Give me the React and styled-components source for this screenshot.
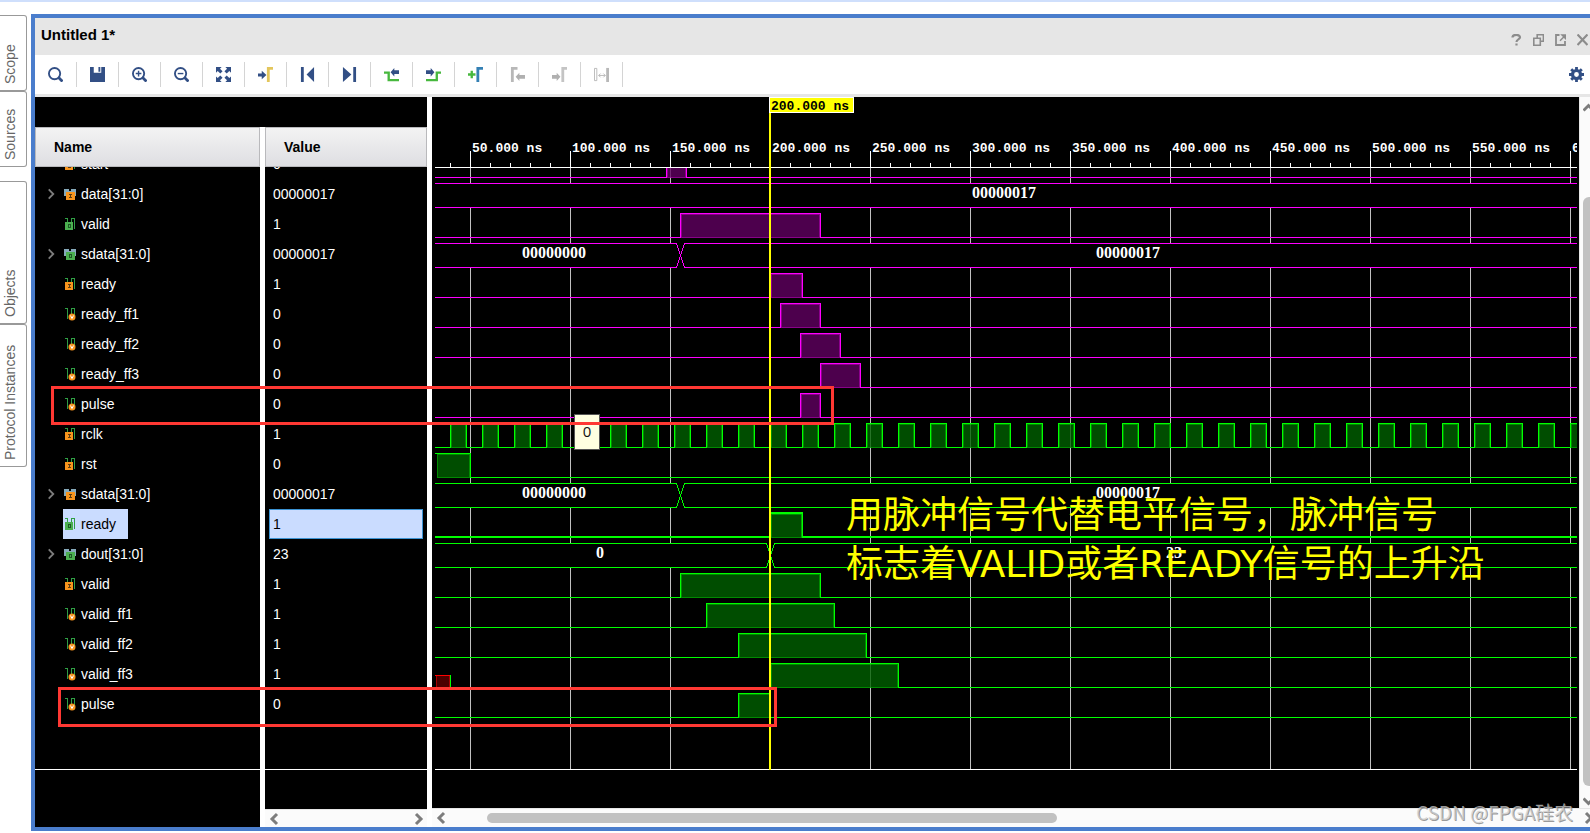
import React from "react";
import styled, { createGlobalStyle, css } from "styled-components";

const GlobalStyle = createGlobalStyle`
  * { box-sizing: border-box; }
  body {
    margin: 0;
    background: #fff;
    font-family: "Liberation Sans", Arial, sans-serif;
    font-size: 14px;
    overflow: hidden;
  }
  button {
    font: inherit;
    border: none;
    background: none;
    padding: 0;
    margin: 0;
    cursor: pointer;
  }
  svg { display: block; }
`;

const Page = styled.div`
  display: flex;
  min-height: 100vh;
  border-top: 2px solid #cfdffc;
  padding: 12px 0 2px;
`;

const Sidebar = styled.nav`
  display: flex;
  flex-direction: column;
  flex: none;
  width: 31px;
  padding-top: 1px;
`;

const TabGroup = styled.div`
  display: flex;
  flex-direction: column;
  margin-bottom: 14px;
`;

const SideTab = styled.button`
  writing-mode: vertical-rl;
  transform: rotate(180deg);
  width: 27px;
  height: ${(p) => (p.$tall ? 143 : 76)}px;
  padding: 6px 2px 4px 8px;
  text-align: left;
  line-height: 16px;
  color: #666;
  border: 1px solid #999;
  border-right: none;
  border-radius: 3px 0 0 3px;
`;

const Panel = styled.main`
  display: flex;
  flex-direction: column;
  flex: 1;
  min-width: 0;
  border: 4px solid #4a7dcc;
  border-right: none;
`;

const TitleBar = styled.header`
  display: flex;
  justify-content: space-between;
  height: 37px;
  padding: 0 2px 0 6px;
  background: #e6e6e6;
`;

const Title = styled.h1`
  margin: 0;
  font-size: 15px;
  line-height: 34px;
  font-weight: bold;
`;

const WindowButtons = styled.div`
  display: flex;
  align-items: center;
  gap: 11px;
  padding-top: 6px;
`;

const Toolbar = styled.div`
  display: flex;
  align-items: center;
  height: 42px;
  padding-right: 4px;
  background: #fff;
  border-bottom: 3px solid #e6e6e6;
`;

const ToolButton = styled.button`
  display: flex;
  align-items: center;
  justify-content: center;
  width: 42px;
  height: 25px;
  border-right: 1px solid #d4d4d4;
`;

const GearButton = styled.button`
  display: flex;
  justify-content: center;
  width: 20px;
  margin-left: auto;
`;

const Body = styled.div`
  position: relative;
  display: flex;
  flex: 1;
`;

const SignalTable = styled.table`
  flex: none;
  width: 392px;
  height: 100%;
  table-layout: fixed;
  border-collapse: separate;
  border-spacing: 0;
  background: #000;
  color: #fff;
  margin-right: 5px;
  td, th { padding: 0; }
  tr > .name { border-right: 5px solid #fff; }
`;

const HeadCell = styled.th`
  height: 40px;
  text-align: left;
  color: #000;
  div {
    height: 40px;
    line-height: 38px;
    padding-left: 18px;
    border: 1px solid #b9b9bc;
    background: linear-gradient(#f3f3f3, #dedee2);
  }
`;

const Cell = styled.td`
  height: ${(p) => p.$height}px;
`;

const RowBox = styled.div`
  display: flex;
  align-items: flex-end;
  height: ${(p) => (p.$cut ? 12 : 30)}px;
  overflow: hidden;
`;

const Expander = styled.button`
  display: flex;
  align-items: center;
  width: 28px;
  height: 30px;
  padding-left: 11px;
  flex: none;
`;

const NameLabel = styled.div`
  display: flex;
  align-items: center;
  height: 30px;
  flex: none;
  padding-right: 12px;
  gap: 4px;
  ${(p) => p.$selected && css`
    background: #cadcff;
    color: #000;
  `}
`;

const ValueLabel = styled.div`
  flex: 1;
  height: 30px;
  line-height: 28px;
  margin: 0 4px;
  padding: 0 3px;
  border: 1px solid transparent;
  ${(p) => p.$selected && css`
    background: #cadcff;
    border-color: #3b93d3;
    color: #000;
  `}
`;

const EndLine = styled.td`
  height: 51px;
  border-bottom: 1px solid #fff;
`;

const ScrollX = styled.div`
  display: flex;
  align-items: center;
  justify-content: space-between;
  height: ${(p) => p.$height}px;
  padding: 0 3px 0 4px;
  overflow: hidden;
  background: #fbfbfb;
  border-top: 1px solid #e6e6e6;
  ${(p) => p.$clip && css`
    padding-right: 0;
    button:last-child { margin-right: -4px; }
  `}
`;

const ThumbX = styled.div`
  width: 570px;
  height: 10px;
  border-radius: 5px;
  background: #c1c1c1;
  margin: 0 auto 0 40px;
`;

const WaveArea = styled.section`
  display: flex;
  flex-direction: column;
  flex: 1;
  min-width: 0;
`;

const WaveRow = styled.div`
  display: flex;
  flex: 1;
  min-height: 0;
`;

const WaveCanvas = styled.div`
  flex: 1;
  min-width: 0;
  padding: 0 2px 0 3px;
  background: #000;
  svg { width: 100%; height: 673px; overflow: hidden; }
`;

const ScrollY = styled.div`
  display: flex;
  flex-direction: column;
  width: 11px;
  flex: none;
  overflow: hidden;
  padding: 4px 0 0 3px;
  border-left: 1px solid #e6e6e6;
  background: #fbfbfb;
`;

const ThumbY = styled.div`
  width: 12px;
  flex: 1;
  margin: 82px 0 8px;
  border-radius: 6px;
  background: #c1c1c1;
`;

const Ruler = styled.text`
  font: bold 13px "Liberation Mono", monospace;
  fill: ${(p) => p.$color || "#fff"};
`;

const BusText = styled.text`
  font: bold 16px "Liberation Serif", serif;
  fill: #fff;
  text-anchor: middle;
`;

const Highlight = styled.div`
  position: absolute;
  left: ${(p) => p.$x}px;
  top: ${(p) => p.$y}px;
  width: ${(p) => p.$w}px;
  height: ${(p) => p.$h}px;
  border: 3px solid #ff3833;
  pointer-events: none;
`;

const Tooltip = styled.div`
  position: absolute;
  left: 539px;
  top: 317px;
  width: 26px;
  height: 36px;
  border: 1px solid #555;
  background: #ffffe1;
  color: #111;
  text-align: center;
  font: 15px/32px "Open Sans", sans-serif;
`;

const Note = styled.p`
  position: absolute;
  left: 811px;
  top: 394px;
  margin: 0;
  white-space: nowrap;
  color: #ff0;
  font: 37px/49px "DejaVu Sans", "Noto Sans CJK SC", sans-serif;
`;

const Watermark = styled.div`
  position: absolute;
  right: 17px;
  bottom: 2px;
  color: rgba(205, 205, 205, 0.75);
  text-shadow: 1px 1px 0 rgba(110, 110, 110, 0.7);
  font: 19px/26px "Noto Sans CJK SC", sans-serif;
`;

const MAGENTA = "#ff00ff";
const GREEN = "#00ff00";
const END = 1200;

const clock = Array.from({ length: 72 }, (_, i) => [40 + i * 16, 48 + i * 16]);

const signals = [
  { name: "start", icon: "in", value: "0", color: MAGENTA, high: [[148, 158]] },
  { name: "data[31:0]", icon: "in", bus: true, value: "00000017", color: MAGENTA, labels: [[317, "00000017"]] },
  { name: "valid", icon: "out", value: "1", color: MAGENTA, high: [[155, 225]] },
  { name: "sdata[31:0]", icon: "out", bus: true, value: "00000017", color: MAGENTA, change: 155, labels: [[92, "00000000"], [379, "00000017"]] },
  { name: "ready", icon: "in", value: "1", color: MAGENTA, high: [[200, 216]] },
  { name: "ready_ff1", icon: "reg", value: "0", color: MAGENTA, high: [[205, 225]] },
  { name: "ready_ff2", icon: "reg", value: "0", color: MAGENTA, high: [[215, 235]] },
  { name: "ready_ff3", icon: "reg", value: "0", color: MAGENTA, high: [[225, 245]] },
  { name: "pulse", icon: "reg", value: "0", color: MAGENTA, high: [[215, 225]] },
  { name: "rclk", icon: "in", value: "1", color: GREEN, high: clock },
  { name: "rst", icon: "in", value: "0", color: GREEN, high: [[33, 50]] },
  { name: "sdata[31:0]", icon: "in", bus: true, value: "00000017", color: GREEN, change: 155, labels: [[92, "00000000"], [379, "00000017"]] },
  { name: "ready", icon: "out", value: "1", color: GREEN, high: [[200, 216]], selected: true },
  { name: "dout[31:0]", icon: "out", bus: true, value: "23", color: GREEN, change: 200, labels: [[115, "0"], [402, "23"]] },
  { name: "valid", icon: "in", value: "1", color: GREEN, high: [[155, 225]] },
  { name: "valid_ff1", icon: "reg", value: "1", color: GREEN, high: [[168, 232]] },
  { name: "valid_ff2", icon: "reg", value: "1", color: GREEN, high: [[184, 248]] },
  { name: "valid_ff3", icon: "reg", value: "1", color: GREEN, high: [[200, 264]], unknown: 40 },
  { name: "pulse", icon: "reg", value: "0", color: GREEN, high: [[184, 200]] },
];

// nanoseconds to canvas pixels
const px = (ns) => ns * 2 - 65;

const SignalIcon = ({ type, bus }) => {
  const badge = type === "out" ? "#4caf50" : "#f7941d";
  return (
    <svg width="14" height="14" viewBox="0 0 14 14" shapeRendering="crispEdges" aria-hidden="true">
      {bus ? (
        <path d="M1 2h5v2h2V2h5v7H1z" fill="#86a9ba" />
      ) : (
        <path d="M2 1.500h2.500v10.500M8.500 12V1.500h3v10.500" fill="none" stroke="#2f9e44" />
      )}
      {type === "reg" ? (
        <g shapeRendering="auto">
          <circle cx="9" cy="10" r="3.500" fill="#f7941d" />
          <path d="M7.500 8.500L9 11.500l1.500-3" fill="none" stroke="#fff" />
        </g>
      ) : (
        <g>
          <rect x={bus ? 3 : 2} y="5" width={bus ? 9 : 8} height="8" fill={badge} />
          {type === "in" ? (
            <path
              d={bus ? "M6 7.500h3M7.500 7v4M6 10.500h3" : "M5 7.500h3M6.500 7v4M5 10.500h3"}
              stroke="#5a3c10"
              fill="none"
            />
          ) : (
            <rect x={bus ? 6.5 : 5.5} y="7.500" width="2" height="3" fill="none" stroke="#1c5a24" />
          )}
        </g>
      )}
    </svg>
  );
};

const Chevron = ({ dir, size = 11 }) => {
  const turn = { right: 0, down: 90, left: 180, up: 270 }[dir];
  return (
    <svg width={size} height="14" viewBox="0 0 11 14" aria-hidden="true">
      <path d="M3 2l5 5-5 5" transform={`rotate(${turn} 5.500 7)`} fill="none" stroke="#7d7d7d" strokeWidth={size > 10 ? 3 : 2} />
    </svg>
  );
};

const NAVY = "#324f85";
const lens = (
  <>
    <circle cx="7" cy="7" r="6" fill="none" stroke={NAVY} strokeWidth="2" />
    <path d="M11 11l4.500 4.500" stroke={NAVY} strokeWidth="3" />
  </>
);
const fitArrow = "M0 0h6L4.200 1.800 7 4.600 4.600 7 1.800 4.200 0 6z";

const tools = [
  ["Search", lens],
  ["Save", <path d="M0 0h4v6h8V0h4v16H0zM9 0h2v5H9z" fill={NAVY} />],
  ["Zoom in", <>{lens}<path d="M4 7h6M7 4v6" stroke={NAVY} strokeWidth="1.500" /></>],
  ["Zoom out", <>{lens}<path d="M4 7h6" stroke={NAVY} strokeWidth="1.500" /></>],
  ["Zoom fit", [0, 90, 180, 270].map((a) => (
    <path key={a} d={fitArrow} transform={`rotate(${a} 8 8)`} fill={NAVY} />
  ))],
  ["Go to cursor", <>
    <path d="M0 7h4V4l5 4.500L4 13v-3H0z" fill={NAVY} />
    <path d="M11 16V1.500h5" stroke="#e3c65c" strokeWidth="3" fill="none" />
  </>],
  ["Previous", <path d="M1 0h3v16H1zM15 0v16L7 8z" fill={NAVY} />],
  ["Next", <path d="M12 0h3v16h-3zM1 0v16l9-8z" fill={NAVY} />],
  ["Previous transition", <>
    <path d="M0 6h5v8h11" stroke="#47b83e" strokeWidth="2.500" fill="none" />
    <path d="M7 5.500L11 1v2.500h5v4h-5V10z" fill={NAVY} />
  </>],
  ["Next transition", <>
    <path d="M0 14h11.500V6H16" stroke="#47b83e" strokeWidth="2.500" fill="none" />
    <path d="M9 5.500L5 1v2.500H0v4h5V10z" fill={NAVY} />
  </>],
  ["Add marker", <>
    <path d="M0 8h8M4 4v8" stroke="#47b83e" strokeWidth="2.500" />
    <path d="M10.500 16V1.500H16" stroke="#3480b4" strokeWidth="3" fill="none" />
  </>],
  ["Previous marker", <>
    <path d="M2.500 16V1.500H8" stroke="#b8b8b8" strokeWidth="3" fill="none" />
    <path d="M6 10.500L10 6v2.500h6v4h-6V15z" fill="#b0b0b0" />
  </>],
  ["Next marker", <>
    <path d="M0 8.500h5V6l4 4.500L5 15v-2.500H0z" fill="#b0b0b0" />
    <path d="M11.500 16V1.500H16" stroke="#c4c4c4" strokeWidth="3" fill="none" />
  </>],
  ["Swap markers", <>
    <path d="M.5 1.500h2.500v13H.5z" stroke="#b8b8b8" fill="none" />
    <path d="M13 1h3v15h-3z" fill="#b8b8b8" />
    <path d="M5 9h7M7 7L5 9l2 2M10 7l2 2-2 2" stroke="#b8b8b8" fill="none" />
  </>],
];

const windowTools = [
  ["Help", <path d="M1.500 3.500C1.500 0 9 0 9 3.300c0 2.200-3.500 2-3.500 4.700M5.500 9.500v2" stroke="#8c8c8c" strokeWidth="2.200" fill="none" />],
  ["Restore", <path d="M.8 4.200h6.500v7H.8zM4.200 4V.8h6.200v6.500H7.500" stroke="#8c8c8c" strokeWidth="1.600" fill="none" />],
  ["Float", <>
    <path d="M4.500 1H1v10h9V7" stroke="#8c8c8c" strokeWidth="1.800" fill="none" />
    <path d="M5 6.800L9 2.800M7 1h4v4z" stroke="#8c8c8c" strokeWidth="1.500" fill="#8c8c8c" />
  </>],
  ["Close", <path d="M.5.5l10 10.500M10.500.5l-10 10.500" stroke="#8c8c8c" strokeWidth="2.200" />],
];

const Gear = () => (
  <svg width="15" height="15" viewBox="0 0 15 15" aria-hidden="true">
    <circle cx="7.500" cy="7.500" r="4" fill="none" stroke={NAVY} strokeWidth="3.200" />
    {[0, 45, 90, 135].map((a) => (
      <path key={a} d="M7.500 0v3M7.500 12v3" stroke={NAVY} strokeWidth="2.800" transform={`rotate(${a} 7.500 7.500)`} />
    ))}
  </svg>
);

const Trace = ({ signal, index }) => {
  const hi = 56 + index * 30;
  const lo = hi + 24;
  const end = px(END);
  const { color, change, high } = signal;

  if (signal.bus) {
    const x = change ? px(change) + 0.5 : null;
    const d = x
      ? `M0 ${hi}.5H${x - 4}L${x + 4} ${lo}.5H${end}M0 ${lo}.5H${x - 4}L${x + 4} ${hi}.5H${end}`
      : `M0 ${hi}.5H${end}M0 ${lo}.5H${end}`;
    return (
      <g>
        <rect x="0" y={hi} width={end} height="24" fill="#000" />
        <path d={d} stroke={color} fill="none" />
        {signal.labels.map(([ns, text]) => (
          <BusText key={ns} x={px(ns)} y={hi + 15}>{text}</BusText>
        ))}
      </g>
    );
  }

  // a two pixel line is crisp on whole pixels, a one pixel line on halves
  const half = signal.selected ? 0 : 0.5;
  const top = hi + half;
  const base = lo + half;
  const from = signal.unknown ? px(signal.unknown) : 0;
  let d = signal.unknown ? `M${from + half} ${lo - 12}V${base}` : `M0 ${base}`;
  high.forEach(([a, b]) => {
    d += a < 35
      ? `M0 ${top}H${px(b) + half}V${base}`
      : `H${px(a) + half}V${top}H${px(b) + half}V${base}`;
  });
  d += `H${end}`;
  return (
    <g>
      {signal.unknown && (
        <>
          <rect x="1.500" y={lo - 11.5} width={from - 2} height="12" fill="#4c0000" stroke="#a80000" />
          <path d={`M0 ${lo - 12}.5H${from}`} stroke="#ff0000" />
        </>
      )}
      <path d={d} stroke={color} strokeWidth={signal.selected ? 2 : 1} fill="none" />
      {high.map(([a, b]) => {
        const x = Math.max(px(a), 0);
        return (
          <g key={a}>
            <rect x={x + 1} y={hi + 1} width={px(b) - x - 1} height="24" fill="#000" fillOpacity="0.700" />
            <rect x={x + 1} y={hi + 1} width={px(b) - x - 1} height="24" fill={color} fillOpacity="0.300" />
            <rect x={x + 1.5} y={hi + 1.5} width={px(b) - x - 2} height="23" fill="none" stroke={color} strokeOpacity="0.350" />
          </g>
        );
      })}
    </g>
  );
};

const Waveform = () => {
  const ticks = [];
  for (let ns = 40; ns < END; ns += 10) ticks.push(ns);
  const major = ticks.filter((ns) => ns % 50 === 0);
  return (
    <svg shapeRendering="crispEdges" role="img" aria-label="Waveform">
      <defs>
        <clipPath id="below-ruler">
          <rect x="0" y="70" width={px(END)} height="603" />
        </clipPath>
      </defs>
      <path d={major.map((ns) => `M${px(ns)}.5 70V672`).join("")} stroke="#c0c0c0" />
      <g clipPath="url(#below-ruler)">
        {signals.map((s, i) => <Trace key={i} signal={s} index={i} />)}
      </g>
      <path d={ticks.map((ns) => `M${px(ns)}.5 ${ns % 50 ? 66 : 54}V70`).join("")} stroke="#fff" />
      <path d={`M0 70.500H${px(END)}M0 672.500H${px(END)}`} stroke="#fff" />
      {major.map((ns) => (
        <Ruler key={ns} x={px(ns) + 2} y="55">{ns}.000 ns</Ruler>
      ))}
      <rect x={px(200) - 1} y="0" width="2" height="673" fill="#ff0" />
      <rect x={px(200) - 0.5} y="0.500" width="84" height="15" fill="#ff0" stroke="#fff" />
      <Ruler x={px(200) + 1} y="13" $color="#000">200.000 ns</Ruler>
    </svg>
  );
};

const SignalRow = ({ signal, cut }) => (
  <tr>
    <Cell className="name" $height={cut ? 12 : 30}>
      <RowBox $cut={cut}>
        <Expander as={signal.bus ? "button" : "span"} aria-label={signal.bus ? `Expand ${signal.name}` : undefined}>
          {signal.bus && <Chevron dir="right" size={10} />}
        </Expander>
        <NameLabel $selected={signal.selected}>
          <SignalIcon type={signal.icon} bus={signal.bus} />
          {signal.name}
        </NameLabel>
      </RowBox>
    </Cell>
    <Cell $height={cut ? 12 : 30}>
      <RowBox $cut={cut}>
        <ValueLabel $selected={signal.selected}>{signal.value}</ValueLabel>
      </RowBox>
    </Cell>
  </tr>
);

export default function App() {
  return (
    <>
      <GlobalStyle />
      <Page>
        <Sidebar>
          <TabGroup>
            <SideTab>Scope</SideTab>
            <SideTab>Sources</SideTab>
          </TabGroup>
          <TabGroup>
            <SideTab $tall>Objects</SideTab>
            <SideTab $tall>Protocol Instances</SideTab>
          </TabGroup>
        </Sidebar>
        <Panel>
          <TitleBar>
            <Title>Untitled 1*</Title>
            <WindowButtons>
              {windowTools.map(([label, icon]) => (
                <button key={label} aria-label={label}>
                  <svg width="11" height="12" viewBox="0 0 11 12">{icon}</svg>
                </button>
              ))}
            </WindowButtons>
          </TitleBar>
          <Toolbar>
            {tools.map(([label, icon]) => (
              <ToolButton key={label} aria-label={label}>
                <svg width="15" height="15" viewBox="0 0 16 16">{icon}</svg>
              </ToolButton>
            ))}
            <GearButton aria-label="Settings"><Gear /></GearButton>
          </Toolbar>
          <Body>
            <SignalTable>
              <colgroup>
                <col width="230" />
                <col width="162" />
              </colgroup>
              <thead>
                <tr>
                  <Cell as="td" colSpan="2" $height={30} />
                </tr>
                <tr>
                  <HeadCell className="name"><div>Name</div></HeadCell>
                  <HeadCell><div>Value</div></HeadCell>
                </tr>
              </thead>
              <tbody>
                {signals.map((s, i) => <SignalRow key={i} signal={s} cut={i === 0} />)}
                <tr>
                  <EndLine className="name" />
                  <EndLine />
                </tr>
                <tr>
                  <td className="name" rowSpan="2" />
                  <td />
                </tr>
                <tr>
                  <Cell $height={18}>
                    <ScrollX $height={18}>
                      <button aria-label="Scroll values left"><Chevron dir="left" /></button>
                      <button aria-label="Scroll values right"><Chevron dir="right" /></button>
                    </ScrollX>
                  </Cell>
                </tr>
              </tbody>
            </SignalTable>
            <WaveArea>
              <WaveRow>
                <WaveCanvas><Waveform /></WaveCanvas>
                <ScrollY>
                  <button aria-label="Scroll up"><Chevron dir="up" /></button>
                  <ThumbY />
                  <button aria-label="Scroll down"><Chevron dir="down" /></button>
                </ScrollY>
              </WaveRow>
              <ScrollX $height={19} $clip>
                <button aria-label="Scroll left"><Chevron dir="left" /></button>
                <ThumbX />
                <button aria-label="Scroll right"><Chevron dir="right" /></button>
              </ScrollX>
            </WaveArea>
            <Tooltip role="tooltip">0</Tooltip>
            <Highlight $x={16} $y={289} $w={783} $h={39} />
            <Highlight $x={23} $y={590} $w={719} $h={40} />
            <Note>
              用脉冲信号代替电平信号，脉冲信号
              <br />
              标志着VALID或者READY信号的上升沿
            </Note>
            <Watermark>CSDN @FPGA硅农</Watermark>
          </Body>
        </Panel>
      </Page>
    </>
  );
}
